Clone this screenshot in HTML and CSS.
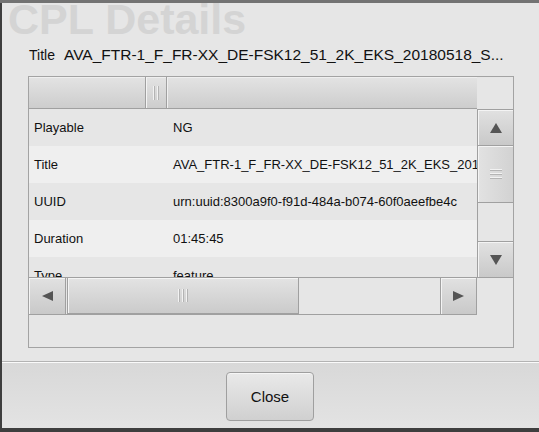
FILE: index.html
```html
<!DOCTYPE html>
<html>
<head>
<meta charset="utf-8">
<link rel="stylesheet" href="styles.css">
</head>
<body>
<div class="dialog">
  <h1 class="heading">CPL Details</h1>
  <div class="title-row">
    <span class="label">Title</span>
    <span class="value">AVA_FTR-1_F_FR-XX_DE-FSK12_51_2K_EKS_20180518_S...</span>
  </div>
  <div class="box">
    <div class="pane">
      <div class="thead">
        <div class="th-1"></div>
        <div class="th-grip"><span></span><span></span></div>
        <div class="th-2"></div>
      </div>
      <div class="corner-top"></div>
      <div class="tbody">
        <div class="row"><div class="c1">Playable</div><div class="c2">NG</div></div>
        <div class="row alt"><div class="c1">Title</div><div class="c2">AVA_FTR-1_F_FR-XX_DE-FSK12_51_2K_EKS_20180518_SMPTE_OV</div></div>
        <div class="row"><div class="c1">UUID</div><div class="c2">urn:uuid:8300a9f0-f91d-484a-b074-60f0aeefbe4c</div></div>
        <div class="row alt"><div class="c1">Duration</div><div class="c2">01:45:45</div></div>
        <div class="row"><div class="c1">Type</div><div class="c2">feature</div></div>
      </div>
      <div class="vscroll">
        <div class="vbtn up"><svg width="12" height="10" viewBox="0 0 12 10"><polygon points="6,0 12,10 0,10" fill="#555"/></svg></div>
        <div class="vthumb"><span></span><span></span><span></span></div>
        <div class="vtrack"></div>
        <div class="vbtn down"><svg width="12" height="10" viewBox="0 0 12 10"><polygon points="0,0 12,0 6,10" fill="#555"/></svg></div>
      </div>
      <div class="hscroll">
        <div class="hbtn left"><svg width="11" height="10" viewBox="0 0 11 10"><polygon points="0,5 11,0 11,10" fill="#555"/></svg></div>
        <div class="hthumb"><span></span><span></span><span></span></div>
        <div class="htrack"></div>
        <div class="hbtn right"><svg width="11" height="10" viewBox="0 0 11 10"><polygon points="0,0 11,5 0,10" fill="#555"/></svg></div>
      </div>
      <div class="corner-bottom"></div>
    </div>
  </div>
  <div class="sep"></div>
  <div class="footer">
    <button class="close">Close</button>
  </div>
</div>
</body>
</html>
```
FILE: styles.css
```css
* { box-sizing: border-box; }
html, body { margin: 0; height: 432px; overflow: hidden; }
body {
  background: linear-gradient(#737373 0, #737373 3px, #3e3e3e 3px);
  font-family: "Liberation Sans", Arial, sans-serif;
  color: #111;
}
.dialog {
  margin: 3px 0 0 2px;
  width: 537px;
  height: 425px;
  background: #e6e6e6;
  display: flex;
  flex-direction: column;
  overflow: hidden;
}
.heading {
  margin: 0;
  padding-left: 6px;
  font-size: 43px;
  font-weight: bold;
  line-height: 32px;
  height: 32px;
  color: #d4d4d4;
  white-space: nowrap;
}
.title-row {
  display: flex;
  align-items: baseline;
  gap: 9px;
  margin: 10px 0 11px 27px;
  height: 20px;
  line-height: 20px;
}
.label { font-size: 14px; }
.value { font-size: 15.5px; white-space: nowrap; }
.box {
  margin-left: 26px;
  width: 486px;
  height: 272px;
  border: 1px solid #a3a3a3;
}
.pane {
  display: grid;
  grid-template-columns: 448px 36px;
  grid-template-rows: 32px 168px 38px;
}
.thead {
  display: flex;
  border-bottom: 1px solid #a0a0a0;
  background: linear-gradient(#e3e3e3, #cdcdcd);
  box-shadow: inset 0 1px #efefef;
}
.th-1 { width: 117px; border-right: 1px solid #a0a0a0; }
.th-grip {
  width: 21px;
  border-right: 1px solid #a0a0a0;
  box-shadow: inset 1px 0 #f4f4f4;
  display: flex;
  justify-content: center;
  align-items: center;
  gap: 2px;
}
.th-grip span {
  width: 2px;
  height: 14px;
  background: #f2f2f2;
  border-right: 1px solid #b4b4b4;
}
.th-2 { flex: 1; box-shadow: inset 1px 0 #f0f0f0; }
.corner-top { background: #e6e6e6; }
.tbody { height: 168px; overflow: hidden; }
.row {
  display: flex;
  height: 37px;
  line-height: 37px;
  font-size: 13px;
  background: #e6e6e6;
}
.row.alt { background: #efefef; }
.c1 { width: 138px; flex: none; padding-left: 5px; }
.c2 { padding-left: 6px; white-space: nowrap; overflow: hidden; flex: 1; }
.vscroll { display: flex; flex-direction: column; height: 168px; }
.vbtn {
  border: 1px solid #a0a0a0;
  border-right: 0;
  background: linear-gradient(#e1e1e1, #c9c9c9);
  box-shadow: inset 1px 1px #f4f4f4;
  display: flex;
  align-items: center;
  justify-content: center;
}
.vbtn.up { height: 37px; }
.vbtn.down { height: 36px; border-bottom: 0; }
.vthumb {
  height: 58px;
  margin-top: -1px;
  border: 1px solid #a0a0a0;
  border-right: 0;
  background: linear-gradient(to right, #e2e2e2, #d2d2d2);
  box-shadow: inset 1px 1px #f4f4f4;
  display: flex;
  flex-direction: column;
  align-items: center;
  justify-content: center;
  gap: 2px;
}
.vthumb span {
  width: 12px;
  height: 2px;
  background: #f2f2f2;
  border-bottom: 1px solid #b4b4b4;
}
.vtrack { height: 38px; border-left: 1px solid #a0a0a0; background: #e6e6e6; }
.hscroll {
  display: flex;
  border-top: 1px solid #a0a0a0;
  border-bottom: 1px solid #a0a0a0;
}
.hbtn {
  width: 37px;
  flex: none;
  background: linear-gradient(#e1e1e1, #c9c9c9);
  box-shadow: inset 1px 1px #f4f4f4;
  display: flex;
  align-items: center;
  justify-content: center;
}
.hbtn.left { border-right: 1px solid #a0a0a0; }
.hbtn.right { width: 37px; border-left: 1px solid #a0a0a0; border-right: 1px solid #a0a0a0; }
.hthumb {
  width: 232px;
  flex: none;
  margin-left: 1px;
  border-left: 1px solid #a0a0a0;
  border-right: 1px solid #a0a0a0;
  border-bottom: 1px solid #a0a0a0;
  background: linear-gradient(#e3e3e3, #cbcbcb);
  box-shadow: inset 1px 1px #f4f4f4;
  display: flex;
  align-items: center;
  justify-content: center;
  gap: 2px;
}
.hthumb span {
  width: 2px;
  height: 13px;
  background: #f2f2f2;
  border-right: 1px solid #b4b4b4;
}
.htrack { flex: 1; background: #e6e6e6; }
.corner-bottom { border-top: 1px solid #a0a0a0; }
.sep {
  margin-top: 13px;
  height: 2px;
  border-top: 1px solid #b3b3b3;
  border-bottom: 1px solid #fafafa;
}
.footer {
  flex: 1;
  padding-top: 9px;
  background: linear-gradient(#d8d8d8, #e3e3e3);
  display: flex;
  justify-content: center;
  align-items: flex-start;
}
.close {
  width: 88px;
  height: 49px;
  margin-right: 1px;
  font-family: "Liberation Sans", Arial, sans-serif;
  font-size: 15px;
  color: #111;
  border: 1px solid #9f9f9f;
  border-radius: 4px;
  background: linear-gradient(#e9e9e9, #d0d0d0);
  box-shadow: inset 0 1px #f6f6f6;
  padding: 0;
}
```
